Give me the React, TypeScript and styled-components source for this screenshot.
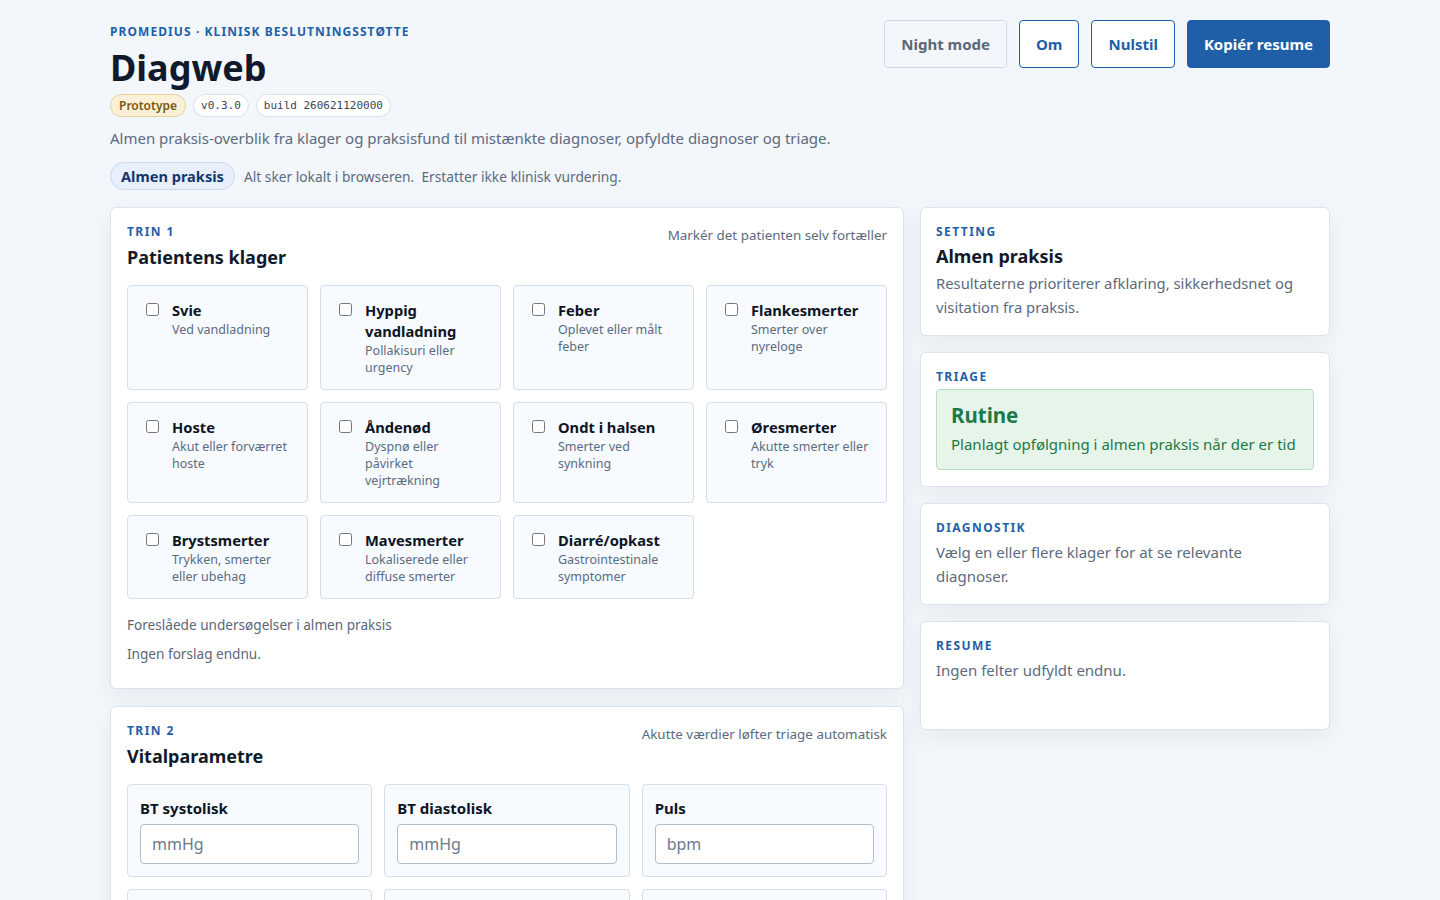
import React from "react";
import styled, { createGlobalStyle } from "styled-components";

const Global = createGlobalStyle`
  * { box-sizing: border-box; }
  body {
    margin: 0;
    background: #f3f6fa;
    font-family: "Noto Sans", "DejaVu Sans", sans-serif;
    color: #111a2b;
  }
`;

const Page = styled.div`
  width: 1220px;
  margin: 0 auto;
  padding: 20px 0 40px;
`;

const Header = styled.header`
  display: flex;
  justify-content: space-between;
  align-items: flex-start;
`;

const Brand = styled.div`
  display: flex;
  flex-direction: column;
`;

const Eyebrow = styled.div`
  font-size: 12px;
  font-weight: 700;
  letter-spacing: 0.09em;
  color: #1f5fa8;
  line-height: 24px;
`;

const Title = styled.h1`
  margin: 0;
  font-size: 36px;
  font-weight: 700;
  line-height: 48px;
  color: #111a2b;
`;

const ChipRow = styled.div`
  display: flex;
  gap: 7px;
  margin-top: 2px;
`;

const Chip = styled.span<{ $tone?: "warn" | "mono" }>`
  display: inline-flex;
  align-items: center;
  height: 23px;
  padding: 0 ${(p) => (p.$tone === "warn" ? "8px" : "7px")};
  border-radius: 12px;
  font-size: ${(p) => (p.$tone === "warn" ? "12px" : "11px")};
  font-weight: ${(p) => (p.$tone === "warn" ? 600 : 400)};
  font-family: ${(p) =>
    p.$tone === "warn" ? `"Noto Sans", sans-serif` : `"DejaVu Sans Mono", monospace`};
  background: ${(p) => (p.$tone === "warn" ? "#fbf1d8" : "#ffffff")};
  border: 1px solid ${(p) => (p.$tone === "warn" ? "#e8d39a" : "#d9e0ea")};
  color: ${(p) => (p.$tone === "warn" ? "#7a5812" : "#3a4656")};
`;

const Lede = styled.p`
  margin: 9px 0 0;
  font-size: 15px;
  line-height: 24px;
  color: #5b6b80;
`;

const ContextRow = styled.div`
  display: flex;
  align-items: center;
  gap: 9px;
  margin-top: 12px;
`;

const ContextPill = styled.span`
  display: inline-flex;
  align-items: center;
  height: 28px;
  padding: 0 10px;
  border-radius: 14px;
  background: #e6effa;
  border: 1px solid #c8daf0;
  color: #13386b;
  font-weight: 700;
  font-size: 14.6px;
`;

const ContextNote = styled.span`
  font-size: 13.75px;
  color: #5b6b80;
`;

const Actions = styled.div`
  display: flex;
  gap: 12px;
`;

const Button = styled.button<{ $variant: "ghost" | "outline" | "primary" }>`
  height: 48px;
  padding: 0 16px;
  border-radius: 4px;
  font-family: "Noto Sans", sans-serif;
  font-size: 15px;
  font-weight: 700;
  cursor: pointer;
  background: ${(p) =>
    p.$variant === "primary" ? "#1f5fa8" : p.$variant === "outline" ? "#ffffff" : "#f3f6fa"};
  border: 1px solid
    ${(p) => (p.$variant === "ghost" ? "#d5dce6" : "#1f5fa8")};
  color: ${(p) =>
    p.$variant === "primary" ? "#ffffff" : p.$variant === "outline" ? "#1f5fa8" : "#5b6778"};
`;

const Layout = styled.div`
  display: grid;
  grid-template-columns: minmax(0, 1fr) 410px;
  gap: 16px;
  margin-top: 17px;
  align-items: start;
`;

const Column = styled.div<{ $gap: number }>`
  display: flex;
  flex-direction: column;
  gap: ${(p) => p.$gap}px;
`;

const Card = styled.section<{ $minHeight?: number }>`
  background: #ffffff;
  border: 1px solid #dbe3ed;
  border-radius: 6px;
  box-shadow: 0 8px 24px rgba(30, 50, 80, 0.06);
  padding: 16px 15px 16px;
  min-height: ${(p) => (p.$minHeight ? `${p.$minHeight}px` : "auto")};
`;

const StepCard = styled(Card)`
  padding: 16px 16px 24px;
`;

const CardHead = styled.div`
  display: flex;
  justify-content: space-between;
  align-items: flex-start;
`;

const Kicker = styled.div`
  font-size: 12px;
  font-weight: 700;
  letter-spacing: 0.12em;
  color: #1f5fa8;
  line-height: 16px;
`;

const CardTitle = styled.h2`
  margin: 4px 0 0;
  font-size: 18px;
  font-weight: 700;
  line-height: 26px;
  color: #111a2b;
`;

const HeadNote = styled.div`
  font-size: 13.4px;
  color: #5b6b80;
  line-height: 22px;
`;

const ComplaintGrid = styled.div`
  display: grid;
  grid-template-columns: repeat(4, minmax(0, 1fr));
  gap: 12px;
  margin-top: 15px;
`;

const Complaint = styled.label`
  display: flex;
  gap: 13px;
  align-items: flex-start;
  padding: 14px 14px 13px;
  background: #f7faff;
  border: 1px solid #d6dfea;
  border-radius: 4px;
  cursor: pointer;
`;

const Check = styled.input`
  width: 13px;
  height: 13px;
  margin: 3px 0 0 4px;
  flex: none;
`;

const ComplaintText = styled.div`
  display: flex;
  flex-direction: column;
`;

const ComplaintTitle = styled.span`
  font-size: 14.7px;
  font-weight: 700;
  line-height: 21px;
  color: #0d1523;
`;

const ComplaintSub = styled.span`
  font-size: 12.5px;
  line-height: 17px;
  color: #5b6b80;
`;

const Suggest = styled.div`
  margin-top: 16px;
  font-size: 13.6px;
  line-height: 20px;
  color: #5b6778;
`;

const SuggestEmpty = styled.div`
  margin-top: 9px;
  font-size: 13.6px;
  line-height: 20px;
  color: #5b6778;
`;

const VitalGrid = styled.div`
  display: grid;
  grid-template-columns: repeat(3, minmax(0, 1fr));
  gap: 12px;
  margin-top: 15px;
`;

const Vital = styled.label`
  display: flex;
  flex-direction: column;
  gap: 5px;
  padding: 12px;
  background: #f7faff;
  border: 1px solid #d6dfea;
  border-radius: 4px;
`;

const VitalLabel = styled.span`
  font-size: 15px;
  font-weight: 700;
  line-height: 22px;
  color: #0d1523;
`;

const VitalInput = styled.input`
  height: 40px;
  border: 1px solid #b4bfcd;
  border-radius: 4px;
  background: #ffffff;
  padding: 0 11px;
  font-family: "Noto Sans", sans-serif;
  font-size: 16px;
  color: #111a2b;
  &::placeholder { color: #6b7a8e; }
`;

const SideTitle = styled.h3`
  margin: 3px 0 0;
  font-size: 18px;
  font-weight: 700;
  line-height: 26px;
`;

const SideText = styled.p<{ $gap?: number; $size?: number }>`
  margin: ${(p) => p.$gap ?? 4}px 0 0;
  font-size: ${(p) => p.$size ?? 15}px;
  line-height: 24px;
  color: #5b6b80;
`;

const TriageBox = styled.div`
  margin-top: 4px;
  padding: 11px 14px 13px;
  background: #e6f4ea;
  border: 1px solid #b5dec3;
  border-radius: 4px;
  color: #1e7a45;
`;

const TriageLevel = styled.div`
  font-size: 20.5px;
  font-weight: 700;
  line-height: 28px;
`;

const TriageText = styled.div`
  font-size: 15px;
  line-height: 24px;
  margin-top: 3px;
`;

const complaints = [
  ["Svie", "Ved vandladning"],
  ["Hyppig vandladning", "Pollakisuri eller urgency"],
  ["Feber", "Oplevet eller målt feber"],
  ["Flankesmerter", "Smerter over nyreloge"],
  ["Hoste", "Akut eller forværret hoste"],
  ["Åndenød", "Dyspnø eller påvirket vejrtrækning"],
  ["Ondt i halsen", "Smerter ved synkning"],
  ["Øresmerter", "Akutte smerter eller tryk"],
  ["Brystsmerter", "Trykken, smerter eller ubehag"],
  ["Mavesmerter", "Lokaliserede eller diffuse smerter"],
  ["Diarré/opkast", "Gastrointestinale symptomer"],
];

const vitals = [
  ["BT systolisk", "mmHg"],
  ["BT diastolisk", "mmHg"],
  ["Puls", "bpm"],
  ["Temperatur", "°C"],
  ["Respirationsfrekvens", "/min"],
  ["Saturation", "%"],
];

export default function App() {
  return (
    <>
      <Global />
      <Page>
        <Header>
          <Brand>
            <Eyebrow>PROMEDIUS · KLINISK BESLUTNINGSSTØTTE</Eyebrow>
            <Title>Diagweb</Title>
            <ChipRow>
              <Chip $tone="warn">Prototype</Chip>
              <Chip $tone="mono">v0.3.0</Chip>
              <Chip $tone="mono">build 260621120000</Chip>
            </ChipRow>
          </Brand>
          <Actions>
            <Button $variant="ghost">Night mode</Button>
            <Button $variant="outline">Om</Button>
            <Button $variant="outline">Nulstil</Button>
            <Button $variant="primary">Kopiér resume</Button>
          </Actions>
        </Header>
        <Lede>
          Almen praksis-overblik fra klager og praksisfund til mistænkte diagnoser, opfyldte diagnoser og triage.
        </Lede>
        <ContextRow>
          <ContextPill>Almen praksis</ContextPill>
          <ContextNote>Alt sker lokalt i browseren.&nbsp; Erstatter ikke klinisk vurdering.</ContextNote>
        </ContextRow>

        <Layout>
          <Column $gap={17}>
            <StepCard>
              <CardHead>
                <div>
                  <Kicker>TRIN 1</Kicker>
                  <CardTitle>Patientens klager</CardTitle>
                </div>
                <HeadNote>Markér det patienten selv fortæller</HeadNote>
              </CardHead>
              <ComplaintGrid>
                {complaints.map(([t, s]) => (
                  <Complaint key={t}>
                    <Check type="checkbox" />
                    <ComplaintText>
                      <ComplaintTitle>{t}</ComplaintTitle>
                      <ComplaintSub>{s}</ComplaintSub>
                    </ComplaintText>
                  </Complaint>
                ))}
              </ComplaintGrid>
              <Suggest>Foreslåede undersøgelser i almen praksis</Suggest>
              <SuggestEmpty>Ingen forslag endnu.</SuggestEmpty>
            </StepCard>

            <StepCard>
              <CardHead>
                <div>
                  <Kicker>TRIN 2</Kicker>
                  <CardTitle>Vitalparametre</CardTitle>
                </div>
                <HeadNote>Akutte værdier løfter triage automatisk</HeadNote>
              </CardHead>
              <VitalGrid>
                {vitals.map(([l, p]) => (
                  <Vital key={l}>
                    <VitalLabel>{l}</VitalLabel>
                    <VitalInput placeholder={p} />
                  </Vital>
                ))}
              </VitalGrid>
            </StepCard>
          </Column>

          <Column $gap={16}>
            <Card>
              <Kicker>SETTING</Kicker>
              <SideTitle>Almen praksis</SideTitle>
              <SideText $gap={2} $size={14.8}>
                Resultaterne prioriterer afklaring, sikkerhedsnet og visitation fra praksis.
              </SideText>
            </Card>
            <Card>
              <Kicker>TRIAGE</Kicker>
              <TriageBox>
                <TriageLevel>Rutine</TriageLevel>
                <TriageText>Planlagt opfølgning i almen praksis når der er tid</TriageText>
              </TriageBox>
            </Card>
            <Card>
              <Kicker>DIAGNOSTIK</Kicker>
              <SideText $gap={4}>Vælg en eller flere klager for at se relevante diagnoser.</SideText>
            </Card>
            <Card $minHeight={109}>
              <Kicker>RESUME</Kicker>
              <SideText $gap={4}>Ingen felter udfyldt endnu.</SideText>
            </Card>
          </Column>
        </Layout>
      </Page>
    </>
  );
}
